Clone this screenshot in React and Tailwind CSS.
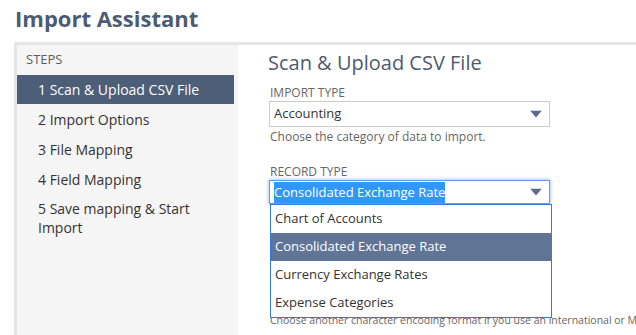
import React from 'react';

const steps = ['2 Import Options', '3 File Mapping', '4 Field Mapping'];
const options = ['Chart of Accounts', 'Consolidated Exchange Rate', 'Currency Exchange Rates', 'Expense Categories'];

const Arrow = () => (
    <svg width="12" height="7" viewBox="0 0 12 7" className="absolute right-[7px] top-1/2 -translate-y-1/2">
        <path d="M0 0 L12 0 L6 7 Z" fill="#5b6d8a" />
    </svg>
);

const App = () => {
    return (
        <div className="w-[636px] h-[335px] overflow-hidden bg-white font-['Open_Sans',sans-serif]">
            <div className="h-[42px] pl-[15px] pt-[3px] text-[22px] leading-[30px] font-bold text-[#4d5b72]">
                Import Assistant
            </div>

            <div className="ml-[14px] flex h-[293px] border-t-[3px] border-l-[3px] border-[#e5e5e5]">
                {/* steps sidebar */}
                <div className="w-[221px] shrink-0 bg-[#f5f5f5] pr-[4px]">
                    <div className="h-[30px] flex items-center pl-[9px] text-[13px] text-[#5e5e5e]">STEPS</div>
                    <div className="h-[29px] flex items-center pl-[21px] bg-[#4d5e78] text-white text-[14px]">
                        1 Scan &amp; Upload CSV File
                    </div>
                    {steps.map(s => (
                        <div key={s} className="h-[30px] flex items-center pl-[21px] text-[14px] text-[#333]">{s}</div>
                    ))}
                    <div className="pt-[5px] pl-[21px] text-[14px] leading-[19px] text-[#333]">
                        5 Save mapping &amp; Start<br />Import
                    </div>
                </div>

                {/* main */}
                <div className="relative flex-1 pl-[30px] pt-[5px]">
                    <div className="text-[20px] leading-[26px] text-[#4f5b6b]">Scan &amp; Upload CSV File</div>

                    <div className="mt-[9px] ml-[2px] text-[12px] leading-[16px] text-[#666]">IMPORT TYPE</div>
                    <div className="relative ml-[1px] w-[281px] h-[26px] border border-[#cccccc] flex items-center pl-[4px] text-[13px] text-[#333]">
                        Accounting
                        <Arrow />
                    </div>
                    <div className="mt-[2px] ml-[2px] text-[12px] leading-[16px] text-[#666]">Choose the category of data to import.</div>

                    <div className="mt-[19px] ml-[2px] text-[12px] leading-[16px] text-[#666]">RECORD TYPE</div>
                    <div className="relative ml-[1px] w-[281px] h-[24px] border border-[#5b9bf0] shadow-[0_0_4px_rgba(77,144,254,0.7)] flex items-center pl-[4px] text-[13px]">
                        <span className="bg-[#3297fd] text-white leading-[21px]">Consolidated Exchange Rate</span>
                        <Arrow />
                    </div>

                    <div className="mt-[108px] ml-[2px] whitespace-nowrap text-[10.5px] leading-[16px] text-[#666]">
                        Choose another character encoding format if you use an international or Mac version of Excel.
                    </div>

                    {/* open dropdown list */}
                    <div className="absolute left-[32px] top-[159px] w-[282px] bg-white border border-[#2f7de1] text-[13px] text-[#333]">
                        {options.map((o, i) => (
                            <div
                                key={o}
                                className={i === 1
                                    ? 'h-[28px] flex items-center pl-[4px] bg-[#607596] text-white'
                                    : 'h-[28px] flex items-center pl-[4px]'}
                            >
                                {o}
                            </div>
                        ))}
                    </div>
                </div>
            </div>
        </div>
    );
};

export default App;
